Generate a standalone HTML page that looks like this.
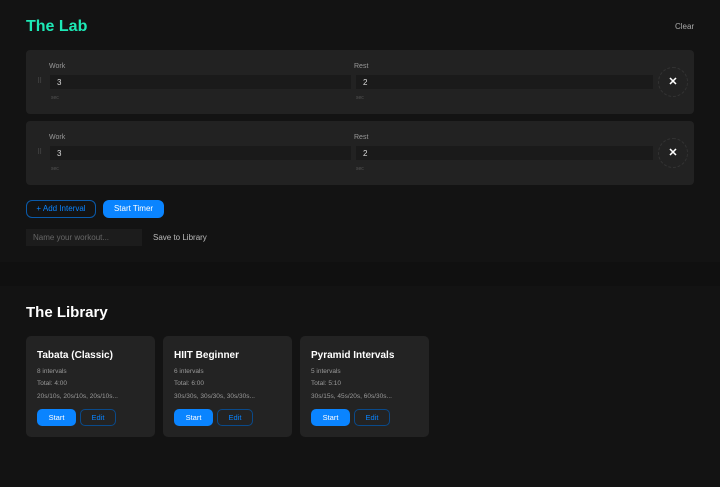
<!DOCTYPE html>
<html><head><meta charset="utf-8"><style>
*{box-sizing:border-box;margin:0;padding:0}
body{width:720px;height:487px;background:#131313;font-family:"Liberation Sans",sans-serif;color:#ddd;position:relative;overflow:hidden}
.a{position:absolute}
.card{position:absolute;left:26px;width:668px;height:64px;background:#222;border-radius:4px}
.lbl{position:absolute;font-size:7px;color:#999}
.inp{position:absolute;height:14px;background:#1a1a1a;font-size:8px;color:#ddd;padding:3px 7px}
.x{position:absolute;width:30px;height:30px;border-radius:50%;border:1px dashed #333;color:#fff;font-size:11px;font-weight:bold;text-align:center;line-height:28px}
.lc{position:absolute;top:336px;width:129px;height:101px;background:#232323;border-radius:5px}
.lc h3{position:absolute;left:11px;top:14px;font-size:10px;color:#fff}
.lc p{position:absolute;left:11px;font-size:6.5px;color:#999}
.bs{position:absolute;left:11px;top:73px;width:39px;height:17px;background:#0a84ff;border-radius:5px;color:#fff;font-size:7.5px;text-align:center;line-height:17px}
.be{position:absolute;left:54px;top:73px;width:36px;height:17px;border:1px solid #0a4a8a;border-radius:5px;color:#0a84ff;font-size:7.5px;text-align:center;line-height:15px}
</style></head><body>
<div class="a" style="left:0;top:262px;width:720px;height:24px;background:#101010"></div>
<div class="a" style="left:26px;top:18px;font-size:16px;font-weight:bold;color:#1de9b6">The Lab</div>
<div class="a" style="left:675px;top:22px;font-size:8px;color:#aaa">Clear</div>

<div class="card" style="top:50px">
<div class="lbl" style="left:23px;top:13px">Work</div>
<div class="a" style="left:11px;top:27px;font-size:7px;color:#555">⠿</div>
<div class="inp" style="left:24px;top:25px;width:301px">3</div>
<div class="lbl" style="left:25px;top:45px;font-size:5px;color:#555">sec</div>
<div class="lbl" style="left:328px;top:13px">Rest</div>
<div class="inp" style="left:330px;top:25px;width:297px">2</div>
<div class="lbl" style="left:330px;top:45px;font-size:5px;color:#555">sec</div>
<div class="x" style="left:632px;top:17px">✕</div>
</div>
<div class="card" style="top:121px">
<div class="lbl" style="left:23px;top:13px">Work</div>
<div class="a" style="left:11px;top:27px;font-size:7px;color:#555">⠿</div>
<div class="inp" style="left:24px;top:25px;width:301px">3</div>
<div class="lbl" style="left:25px;top:45px;font-size:5px;color:#555">sec</div>
<div class="lbl" style="left:328px;top:13px">Rest</div>
<div class="inp" style="left:330px;top:25px;width:297px">2</div>
<div class="lbl" style="left:330px;top:45px;font-size:5px;color:#555">sec</div>
<div class="x" style="left:632px;top:17px">✕</div>
</div>

<div class="a" style="left:26px;top:200px;width:70px;height:18px;border:1px solid #0a5aaa;border-radius:6px;color:#0a84ff;font-size:8px;text-align:center;line-height:16px">+ Add Interval</div>
<div class="a" style="left:103px;top:200px;width:61px;height:18px;background:#0a84ff;border-radius:6px;color:#fff;font-size:8px;text-align:center;line-height:18px">Start Timer</div>
<div class="a" style="left:26px;top:229px;width:116px;height:17px;background:#1c1c1c;color:#666;font-size:8px;padding:4px 7px">Name your workout...</div>
<div class="a" style="left:153px;top:233px;font-size:8px;color:#bbb">Save to Library</div>

<div class="a" style="left:26px;top:304px;font-size:15px;font-weight:bold;color:#fff">The Library</div>
<div class="lc" style="left:26px"><h3>Tabata (Classic)</h3><p style="top:32px">8 intervals</p><p style="top:44px">Total: 4:00</p><p style="top:57px">20s/10s, 20s/10s, 20s/10s...</p><div class="bs">Start</div><div class="be">Edit</div></div>
<div class="lc" style="left:163px"><h3>HIIT Beginner</h3><p style="top:32px">6 intervals</p><p style="top:44px">Total: 6:00</p><p style="top:57px">30s/30s, 30s/30s, 30s/30s...</p><div class="bs">Start</div><div class="be">Edit</div></div>
<div class="lc" style="left:300px"><h3>Pyramid Intervals</h3><p style="top:32px">5 intervals</p><p style="top:44px">Total: 5:10</p><p style="top:57px">30s/15s, 45s/20s, 60s/30s...</p><div class="bs">Start</div><div class="be">Edit</div></div>
</body></html>
